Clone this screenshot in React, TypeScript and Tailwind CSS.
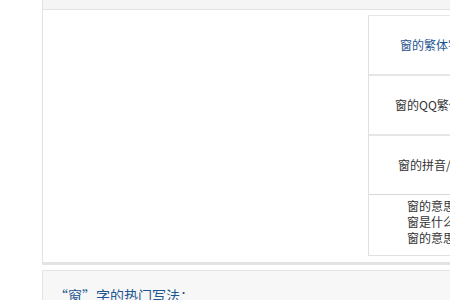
import React from "react";

export default function App() {
  const font = { fontFamily: '"SimSun","Noto Sans CJK SC","Liberation Sans",sans-serif' };
  return (
    <div className="w-[450px] h-[300px] overflow-hidden bg-white text-[12px] text-[#333]" style={font}>
      <div className="ml-[42px] w-[600px]">
        <div className="h-[10px] bg-[#f5f5f5] border-l border-b border-[#e2e2e2]" />
        <div className="border-l border-[#e2e2e2] border-b-[3px] border-b-[#e3e3e3] bg-white h-[255px] pt-[5px] pl-[325px]">
          <div className="w-[240px] border-l border-[#e0e0e0] border-b border-b-[#e0e0e0]">
            <div className="h-[59px] border-t border-[#e6e6e6] flex items-center pl-[31px] text-[#1d5591]">窗的繁体字</div>
            <div className="h-[60px] border-t-2 border-[#e6e6e6] flex items-center pl-[26px]">窗的QQ繁体字</div>
            <div className="h-[60px] border-t-2 border-[#e6e6e6] flex items-center pl-[29px]">窗的拼音/部首</div>
            <div className="h-[61px] border-t border-[#d6d6d6] pl-[38px] pt-[3px] leading-[16px]">
              <div>窗的意思是什么</div>
              <div>窗是什么意思</div>
              <div>窗的意思解释</div>
            </div>
          </div>
        </div>
        <div className="h-[5px]" />
        <div className="h-[40px] bg-[#f7f7f7] border-l border-t border-[#e4e4e4] pl-[11px] pt-[14px] text-[14px] text-[#1d5591] leading-[20px]">
          “窗”字的热门写法：
        </div>
      </div>
    </div>
  );
}
